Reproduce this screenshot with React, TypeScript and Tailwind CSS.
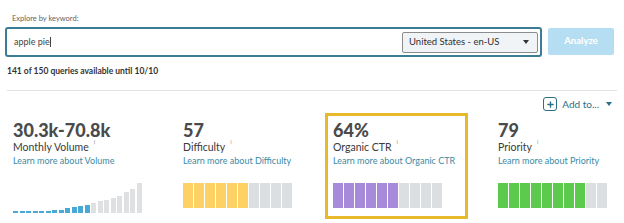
import { Plus } from 'lucide-react';

const volumeBars = [2, 2, 2, 2, 2, 2.5, 3, 3.5, 5, 6, 7, 8.5, 10, 12, 13, 15, 17, 21, 24, 30];

// segmented score bar, 10 blocks
function ScoreBar({ filled, color }: { filled: number; color: string }) {
  return (
    <div className="flex gap-[1.5px] h-[25px]">
      {Array.from({ length: 10 }).map((_, i) => (
        <div
          key={i}
          className="w-[9.5px] h-full"
          style={{ backgroundColor: i < filled ? color : '#dcdfe2' }}
        />
      ))}
    </div>
  );
}

function VolumeChart() {
  return (
    <div className="flex items-end gap-[1.5px] h-[30px]">
      {volumeBars.map((h, i) => (
        <div
          key={i}
          className="w-[5px]"
          style={{ height: `${h}px`, backgroundColor: i < 12 ? '#48a8d6' : '#dfe0e2' }}
        />
      ))}
    </div>
  );
}

function Metric({
  value,
  label,
  link,
  children,
  className = '',
}: {
  value: string;
  label: string;
  link: string;
  children: React.ReactNode;
  className?: string;
}) {
  return (
    <div className={`border-[3px] px-[5px] pt-[5px] pb-[3px] whitespace-nowrap ${className}`}>
      <div className="text-[18px] leading-[19px] font-black text-[#4b4b4b]">{value}</div>
      <div className="text-[10.5px] leading-[14px] text-[#3a3a3a] flex">
        {label}
        <span className="text-[6px] leading-[6px] text-[#999] ml-[5px] -mt-[1px]">i</span>
      </div>
      <div className="mt-[1px] text-[9px] leading-[12px] text-[#3b8ba6]">{link}</div>
      <div className="mt-[16px]">{children}</div>
    </div>
  );
}

export default function App() {
  return (
    <div className="w-[624px] h-[223px] bg-white overflow-hidden font-['Lato','Liberation_Sans',sans-serif]">
      {/* search area */}
      <div className="pt-[14px] px-[5px]">
        <div className="ml-[7px] text-[7.5px] leading-[10px] text-[#5f5f5f]">Explore by keyword:</div>
        <div className="mt-[3px] flex items-start">
          <div className="w-[537px] h-[30px] border-2 border-[#3b7d96] rounded-[3px] flex items-center pl-[7px] pr-[2px]">
            <span className="text-[9px] text-[#444]">apple pie</span>
            <span className="w-px h-[10px] bg-[#444]" />
            <div className="ml-auto w-[136px] h-[21px] border border-[#8c8c8c] rounded-[2px] bg-[#f1f4f6] flex items-center pl-[6px] pr-[8px]">
              <span className="text-[9.5px] text-[#2f2f2f]">United States - en-US</span>
              <span className="ml-auto w-0 h-0 border-l-[3.5px] border-r-[3.5px] border-t-[4px] border-l-transparent border-r-transparent border-t-[#333]" />
            </div>
          </div>
          <button className="ml-[6px] mt-[1px] w-[66px] h-[27px] rounded-[2px] bg-[#b6def2] text-white text-[9.5px] font-bold">
            Analyze
          </button>
        </div>
        <div className="mt-[9px] ml-[2px] text-[8.5px] leading-[10px] font-bold text-[#333]">
          141 of 150 queries available until 10/10
        </div>
      </div>

      <div className="mt-[14px] mx-[7px] border-t border-[#e3e3e3]" />

      {/* add to */}
      <div className="mt-[6px] flex items-center justify-end pr-[12px] h-[14px]">
        <div className="w-[14px] h-[14px] border border-[#2d6d86] rounded-[3px] flex items-center justify-center">
          <Plus size={9} strokeWidth={3.5} color="#2d6d86" />
        </div>
        <span className="ml-[5px] text-[10px] text-[#2d6d86]">Add to...</span>
        <span className="ml-[7px] w-0 h-0 border-l-[3.5px] border-r-[3.5px] border-t-[4px] border-l-transparent border-r-transparent border-t-[#2d6d86]" />
      </div>

      {/* metrics */}
      <div className="mt-[2px] flex pl-[5px]">
        <Metric value="30.3k-70.8k" label="Monthly Volume" link="Learn more about Volume" className="w-[170px] border-transparent">
          <VolumeChart />
        </Metric>
        <Metric value="57" label="Difficulty" link="Learn more about Difficulty" className="w-[150px] border-transparent">
          <ScoreBar filled={6} color="#fdd163" />
        </Metric>
        <Metric value="64%" label="Organic CTR" link="Learn more about Organic CTR" className="w-[143px] border-[#e8b92b]">
          <ScoreBar filled={6} color="#a78ad9" />
        </Metric>
        <Metric value="79" label="Priority" link="Learn more about Priority" className="ml-[22px] w-[126px] border-transparent">
          <ScoreBar filled={8} color="#5ccb4d" />
        </Metric>
      </div>
    </div>
  );
}
